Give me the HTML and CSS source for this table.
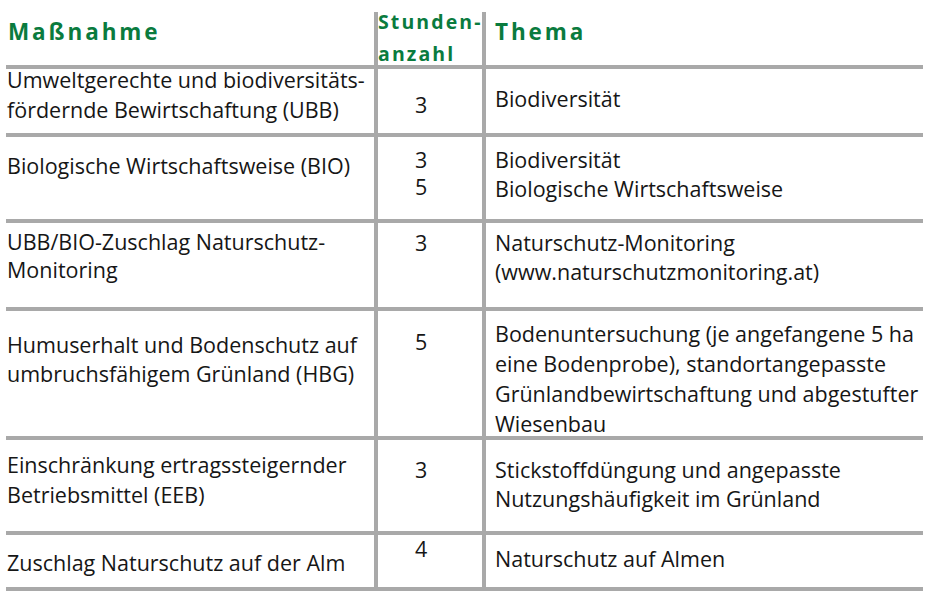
FILE: index.html
```html
<!DOCTYPE html>
<html lang="de">
<head>
<meta charset="utf-8">
<title>Maßnahmen</title>
<link rel="stylesheet" href="styles.css">
</head>
<body>
<div class="tbl">
  <div class="row head">
    <div class="c c1"><span class="h">Maßnahme</span></div>
    <div class="c c2"><span class="hs">Stunden-<br>anzahl</span></div>
    <div class="c c3"><span class="h">Thema</span></div>
  </div>
  <div class="row r1">
    <div class="c c1">Umweltgerechte und biodiversitäts-<br>fördernde Bewirtschaftung (UBB)</div>
    <div class="c c2">3</div>
    <div class="c c3">Biodiversität</div>
  </div>
  <div class="row r2">
    <div class="c c1">Biologische Wirtschaftsweise (BIO)</div>
    <div class="c c2">3<br>5</div>
    <div class="c c3">Biodiversität<br>Biologische Wirtschaftsweise</div>
  </div>
  <div class="row r3">
    <div class="c c1">UBB/BIO-Zuschlag Naturschutz-<br>Monitoring</div>
    <div class="c c2">3</div>
    <div class="c c3">Naturschutz-Monitoring<br>(www.naturschutzmonitoring.at)</div>
  </div>
  <div class="row r4">
    <div class="c c1">Humuserhalt und Bodenschutz auf<br>umbruchsfähigem Grünland (HBG)</div>
    <div class="c c2">5</div>
    <div class="c c3">Bodenuntersuchung (je angefangene 5 ha<br>eine Bodenprobe), standortangepasste<br>Grünlandbewirtschaftung und abgestufter<br>Wiesenbau</div>
  </div>
  <div class="row r5">
    <div class="c c1">Einschränkung ertragssteigernder<br>Betriebsmittel (EEB)</div>
    <div class="c c2">3</div>
    <div class="c c3">Stickstoffdüngung und angepasste<br>Nutzungshäufigkeit im Grünland</div>
  </div>
  <div class="row r6">
    <div class="c c1">Zuschlag Naturschutz auf der Alm</div>
    <div class="c c2">4</div>
    <div class="c c3">Naturschutz auf Almen</div>
  </div>
</div>
</body>
</html>
```
FILE: styles.css
```css
html, body {
  margin: 0;
  padding: 0;
  background: #ffffff;
}
body {
  font-family: "Open Sans", "Noto Sans", sans-serif;
  font-size: 21.5px;
  line-height: 30px;
  color: #161616;
}
.tbl {
  margin: 12px 0 0 6px;
  width: 917px;
}
.row {
  display: grid;
  grid-template-columns: 368px 108px 441px;
  border-bottom: 4px solid #a9a9a9;
  box-sizing: content-box;
}
.c {
  white-space: nowrap;
  box-sizing: border-box;
}
.c2, .c3 {
  border-left: 4px solid #a9a9a9;
}
.c1 { padding-left: 1px; }
.c2 { padding-left: 37px; }
.c3 { padding-left: 9px; }

.head { height: 53px; }
.head .c1 { padding-left: 2px; }
.head .c2 { padding-left: 0; }
.h {
  display: block;
  margin-top: 5px;
  font-size: 22.5px;
  line-height: 30px;
  font-weight: 700;
  letter-spacing: 2.9px;
  color: #0a7b3e;
}
.hs {
  display: block;
  margin-top: -6px;
  font-size: 19.5px;
  line-height: 32px;
  font-weight: 700;
  letter-spacing: 2.1px;
  color: #0a7b3e;
}

.r1 { height: 64px; }
.r1 .c1 { padding-top: 0; margin-top: -4px; }
.r1 .c2 { padding-top: 21px; }
.r1 .c3 { padding-top: 15px; }

.r2 { height: 82px; }
.r2 .c1 { padding-top: 14px; }
.r2 .c2 { padding-top: 9px; line-height: 27px; }
.r2 .c3 { padding-top: 8px; line-height: 29px; }

.r3 { height: 84px; }
.r3 .c1 { padding-top: 5px; line-height: 28px; }
.r3 .c2 { padding-top: 5px; }
.r3 .c3 { padding-top: 5px; line-height: 29px; }

.r4 { height: 125px; }
.r4 .c1 { padding-top: 19px; line-height: 29px; }
.r4 .c2 { padding-top: 16px; }
.r4 .c3 { padding-top: 8px; }

.r5 { height: 91px; }
.r5 .c1 { padding-top: 10px; }
.r5 .c2 { padding-top: 15px; }
.r5 .c3 { padding-top: 15px; line-height: 29px; }

.r6 { height: 52px; }
.r6 .c1 { padding-top: 13px; }
.r6 .c2 { padding-top: 0; margin-top: -1px; }
.r6 .c3 { padding-top: 9px; }
```
